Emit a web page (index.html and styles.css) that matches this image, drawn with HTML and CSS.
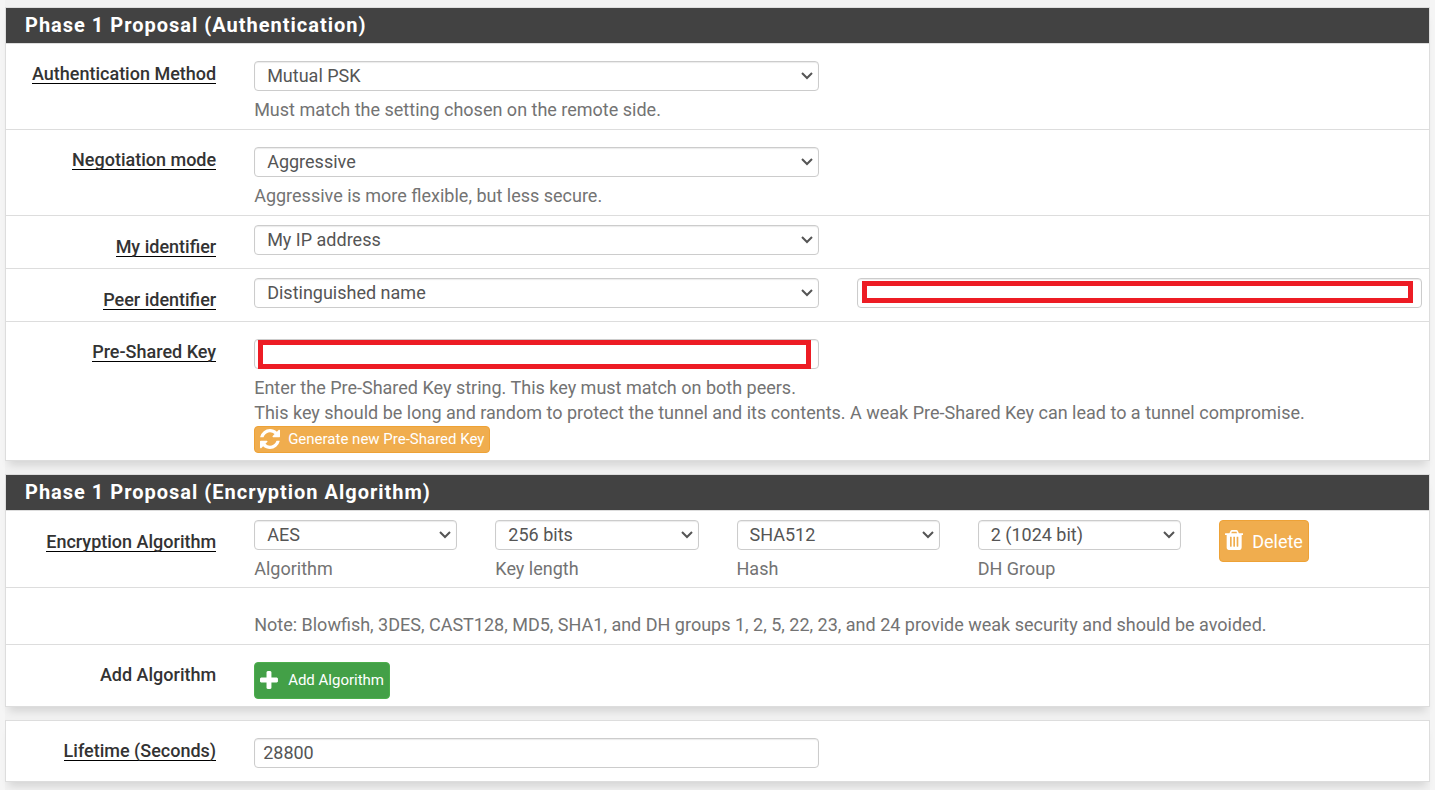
FILE: index.html
```html
<!DOCTYPE html>
<html lang="en">
<head>
<meta charset="utf-8">
<title>IPsec Phase 1</title>
<link rel="stylesheet" href="styles.css">
</head>
<body>
<form class="page">
  <section class="panel">
    <h2 class="panel-title">Phase 1 Proposal (Authentication)</h2>
    <div class="row">
      <label class="label" for="auth"><span class="required">Authentication Method</span></label>
      <div class="wide">
        <select class="control" id="auth"><option>Mutual PSK</option></select>
        <p class="help">Must match the setting chosen on the remote side.</p>
      </div>
    </div>
    <div class="row">
      <label class="label" for="mode"><span class="required">Negotiation mode</span></label>
      <div class="wide">
        <select class="control" id="mode"><option>Aggressive</option></select>
        <p class="help">Aggressive is more flexible, but less secure.</p>
      </div>
    </div>
    <div class="row row-group">
      <label class="label" for="myid"><span class="required">My identifier</span></label>
      <div class="wide"><select class="control" id="myid"><option>My IP address</option></select></div>
    </div>
    <div class="row row-group">
      <label class="label" for="peerid"><span class="required">Peer identifier</span></label>
      <div class="wide"><select class="control" id="peerid"><option>Distinguished name</option></select></div>
      <div class="wide masked masked-peer"><input class="control" type="text" aria-label="Peer identifier value"></div>
    </div>
    <div class="row">
      <label class="label" for="psk"><span class="required">Pre-Shared Key</span></label>
      <div class="full">
        <div class="field-half masked masked-key"><input class="control" id="psk" type="text"></div>
        <p class="help">Enter the Pre-Shared Key string. This key must match on both peers.<br>This key should be long and random to protect the tunnel and its contents. A weak Pre-Shared Key can lead to a tunnel compromise.</p>
        <button class="btn btn-warning btn-xs" type="button">
          <svg class="icon" viewBox="0 0 1536 1536" aria-hidden="true"><path d="M1511 928q0 5-1 7-64 268-268 434.500T764 1536q-146 0-282.500-55T238 1324l-129 129q-19 19-45 19t-45-19-19-45V960q0-26 19-45t45-19h448q26 0 45 19t19 45-19 45l-137 137q71 66 161 102t187 36q134 0 250-65t186-179q11-17 53-117 8-23 30-23h192q13 0 22.500 9.500t9.500 22.500zm25-800v448q0 26-19 45t-45 19h-448q-26 0-45-19t-19-45 19-45l138-138Q969 256 768 256q-134 0-250 65T332 500q-11 17-53 117-8 23-30 23H50q-13 0-22.500-9.500T18 608v-7q65-268 270-434.500T768 0q146 0 284 55.500T1297 212l130-129q19-19 45-19t45 19 19 45z"/></svg>
          Generate new Pre-Shared Key
        </button>
      </div>
    </div>
  </section>

  <section class="panel">
    <h2 class="panel-title">Phase 1 Proposal (Encryption Algorithm)</h2>
    <div class="row row-group row-algo">
      <label class="label" for="algo"><span class="required">Encryption Algorithm</span></label>
      <div class="narrow">
        <select class="control" id="algo"><option>AES</option></select>
        <p class="help">Algorithm</p>
      </div>
      <div class="narrow">
        <select class="control" aria-label="Key length"><option>256 bits</option></select>
        <p class="help">Key length</p>
      </div>
      <div class="narrow">
        <select class="control" aria-label="Hash"><option>SHA512</option></select>
        <p class="help">Hash</p>
      </div>
      <div class="narrow">
        <select class="control" aria-label="DH Group"><option>2 (1024 bit)</option></select>
        <p class="help">DH Group</p>
      </div>
      <div class="narrow">
        <button class="btn btn-warning btn-md" type="button">
          <svg class="icon" viewBox="0 0 1408 1536" aria-hidden="true"><path fill-rule="evenodd" d="M512 1248V544q0-14-9-23t-23-9h-64q-14 0-23 9t-9 23v704q0 14 9 23t23 9h64q14 0 23-9t9-23zm256 0V544q0-14-9-23t-23-9h-64q-14 0-23 9t-9 23v704q0 14 9 23t23 9h64q14 0 23-9t9-23zm256 0V544q0-14-9-23t-23-9h-64q-14 0-23 9t-9 23v704q0 14 9 23t23 9h64q14 0 23-9t9-23zM480 256h448l-48-117q-7-9-17-11H546q-10 2-17 11zm928 32v64q0 14-9 23t-23 9h-96v948q0 83-47 143.500t-113 60.500H288q-66 0-113-58.500T128 1336V384H32q-14 0-23-9t-9-23v-64q0-14 9-23t23-9h309l70-167q15-37 54-63t79-26h320q40 0 79 26t54 63l70 167h309q14 0 23 9t9 23z"/></svg>
          Delete
        </button>
      </div>
    </div>
    <div class="row row-note">
      <p class="help full">Note: Blowfish, 3DES, CAST128, MD5, SHA1, and DH groups 1, 2, 5, 22, 23, and 24 provide weak security and should be avoided.</p>
    </div>
    <div class="row">
      <div class="label">Add Algorithm</div>
      <div class="full">
        <button class="btn btn-success btn-sm" type="button">
          <svg class="icon" viewBox="0 -80 1488 1568" aria-hidden="true"><path d="M1408 608v192q0 40-28 68t-68 28H896v416q0 40-28 68t-68 28H608q-40 0-68-28t-28-68V896H96q-40 0-68-28T0 800V608q0-40 28-68t68-28h416V96q0-40 28-68t68-28h192q40 0 68 28t28 68v416h416q40 0 68 28t28 68z"/></svg>
          Add Algorithm
        </button>
      </div>
    </div>
  </section>

  <section class="panel">
    <div class="row row-last">
      <label class="label" for="life"><span class="required">Lifetime (Seconds)</span></label>
      <div class="wide"><input class="control" id="life" type="text" value="28800"></div>
    </div>
  </section>
</form>
</body>
</html>
```
FILE: styles.css
```css
* { box-sizing: border-box; }

body {
  margin: 0;
  background: #f5f5f5;
  color: #333;
  font: 18px/25px Roboto, "Liberation Sans", sans-serif;
}

.page {
  display: flex;
  flex-direction: column;
  gap: 13px;
  margin: 0 5px;
  padding: 7px 0 8px;
  background: #f1f1f1;
}

.panel {
  background: #fff;
  border: 1px solid #ddd;
  box-shadow: 0 8px 8px -4px rgba(0, 0, 0, 0.12);
}

.panel-title {
  margin: 0;
  padding: 5px 19px;
  background: #424242;
  color: #fff;
  font-size: 20px;
  font-weight: 700;
  letter-spacing: 1px;
}

.row {
  display: grid;
  grid-template-columns: repeat(12, minmax(0, 1fr));
  column-gap: 38px;
  align-items: start;
  padding: 17px 7px 7px;
  border-top: 1px solid #ddd;
}

.row:first-child { border-top: 0; }
.row-group { padding: 9px 7px; }
.row-group .label { padding-top: 9px; }
.row-algo { padding-bottom: 6px; }
.row-note { padding-top: 24px; }
.row-last { padding: 17px 7px 13px; }

.label {
  grid-column: span 2;
  font-weight: 500;
  text-align: right;
}

.required {
  display: inline-block;
  line-height: 18px;
  border-bottom: 1px solid #000;
}

.wide { grid-column: span 5; }
.narrow { grid-column: span 2; }
.full { grid-column: 3 / -1; }
.field-half { width: calc(50% - 19px); }

.control {
  display: block;
  width: 100%;
  height: 30px;
  padding: 0 8px 1px;
  background: #fff;
  border: 1px solid #ccc;
  border-radius: 4px;
  box-shadow: inset 0 1px 1px rgba(0, 0, 0, 0.08);
  color: #555;
  font: inherit;
}

select.control {
  appearance: none;
  padding: 0 24px 2px 12px;
  background: #fff url("data:image/svg+xml,%3Csvg xmlns='http://www.w3.org/2000/svg' width='12' height='8' viewBox='0 0 12 8'%3E%3Cpath d='M1 1l5 5 5-5' fill='none' stroke='%23555' stroke-width='2'/%3E%3C/svg%3E") no-repeat right 5px center;
}

.help {
  margin: 6px 0 0;
  color: #737373;
}

.row-note .help { margin: 0; }

.masked { position: relative; }

.masked::after {
  content: "";
  position: absolute;
  border: 5px solid #ed1c24;
  background: #fff;
}

.masked-peer::after { inset: 3px 9px 5px 5px; }
.masked-key::after { inset: 1px 8px 0 4px; }

.btn {
  display: flex;
  align-items: center;
  gap: 8px;
  padding: 0 5px;
  border: 1px solid #eea236;
  border-radius: 4px;
  color: #fff;
  font: inherit;
  white-space: nowrap;
}

.btn-warning { background: #f0ad4e; }
.btn-success { background: #43a047; border-color: #4cae4c; }
.btn-xs { height: 27px; margin-top: 1px; font-size: 15px; }
.btn-sm { height: 37px; font-size: 15px; gap: 9px; }
.btn-md { height: 42px; gap: 9px; }

.icon {
  height: 20px;
  margin-bottom: 2px;
  fill: currentColor;
}
```
